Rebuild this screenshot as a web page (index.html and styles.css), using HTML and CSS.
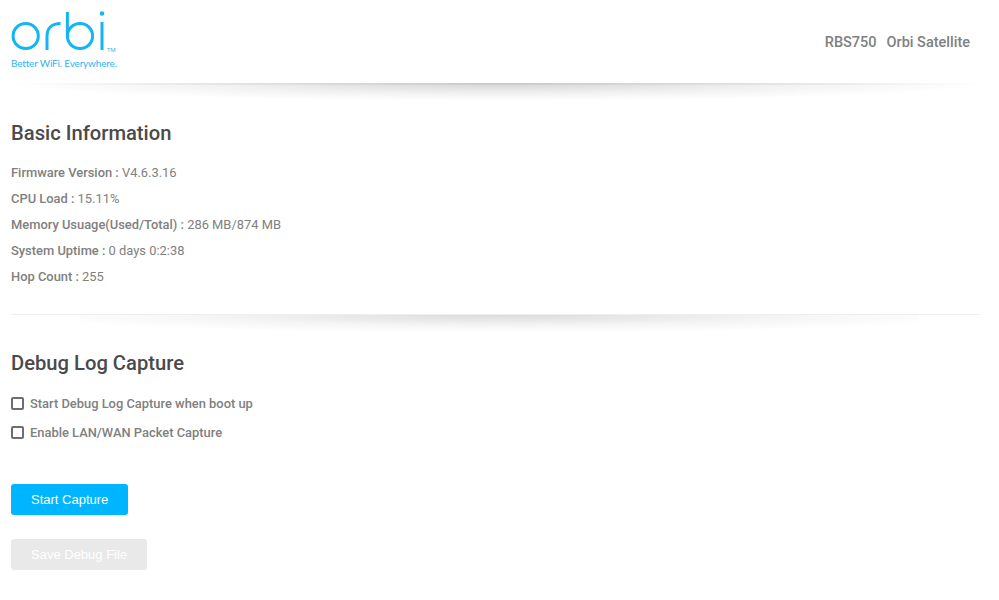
FILE: index.html
```html
<!DOCTYPE html>
<html>

<head>
  <title>Orbi Debug</title>
  <link rel="stylesheet" href="styles.css">
</head>

<body>
  <div class="header">
    <div class="logo">
      <svg class="logoMark" width="110" height="57" viewBox="10 0 110 57">
        <g fill="none" stroke="#12b5f5" stroke-width="3">
          <circle cx="25.7" cy="36" r="12.6" />
          <path d="M47 50V36C47 28 52 23.5 60.5 23.5" />
          <circle cx="80" cy="36" r="12.6" />
          <path d="M67.4 36V12" />
          <path d="M102 50V22" />
        </g>
        <circle cx="102" cy="13.5" r="2.3" fill="#12b5f5" />
      </svg>
      <span class="tm">TM</span>
      <div class="tagline">Better WiFi. Everywhere.</div>
    </div>
    <div class="model"><span>RBS750</span><span>Orbi Satellite</span></div>
  </div>
  <div class="shadow"></div>

  <div class="section">
    <h2>Basic Information</h2>
    <div class="row"><b>Firmware Version :</b> V4.6.3.16</div>
    <div class="row"><b>CPU Load :</b> 15.11%</div>
    <div class="row"><b>Memory Usuage(Used/Total) :</b> 286 MB/874 MB</div>
    <div class="row"><b>System Uptime :</b> 0 days 0:2:38</div>
    <div class="row"><b>Hop Count :</b> 255</div>
  </div>

  <div class="divider"></div>
  <div class="shadow shadowNarrow"></div>

  <div class="section debug">
    <h2>Debug Log Capture</h2>
    <label class="check"><input type="checkbox" />Start Debug Log Capture when boot up</label>
    <label class="check"><input type="checkbox" />Enable LAN/WAN Packet Capture</label>
    <div class="actions">
      <button class="btn">Start Capture</button>
      <button class="btn btnOff" disabled>Save Debug File</button>
    </div>
  </div>
</body>

</html>
```

FILE: styles.css
```css
body {
  margin: 0;
  background: #fff;
  color: #808080;
  font-family: Roboto, "Liberation Sans", sans-serif;
  font-size: 12.9px;
}

.header {
  height: 83px;
  padding: 0 29px 0 11px;
  display: flex;
  justify-content: space-between;
  box-sizing: border-box;
}

.logo {
  position: relative;
  width: 110px;
}

.logoMark {
  display: block;
  margin-left: -1px;
}

.tm {
  position: absolute;
  left: 96px;
  top: 46px;
  font-family: "Open Sans", sans-serif;
  font-size: 6px;
  color: #12b5f5;
}

.tagline {
  font-family: Lato, "Open Sans", sans-serif;
  font-size: 10px;
  letter-spacing: -0.17px;
  line-height: 12px;
  color: #2fb4ee;
  white-space: nowrap;
}

.model {
  display: flex;
  gap: 10px;
  padding-top: 34px;
  font-size: 14.5px;
  font-weight: 500;
  line-height: 18px;
}

.shadow {
  height: 18px;
  margin: 0 10px;
  background:
    linear-gradient(90deg, rgba(0, 0, 0, 0), rgba(0, 0, 0, 0.05) 20%, rgba(0, 0, 0, 0.05) 80%, rgba(0, 0, 0, 0)) no-repeat 0 0 / 100% 2px,
    radial-gradient(ellipse 50% 100% at 50% 0, rgba(0, 0, 0, 0.17), rgba(0, 0, 0, 0.05) 60%, rgba(0, 0, 0, 0) 100%);
}

.shadowNarrow {
  margin: 0 80px;
  background: radial-gradient(ellipse 58% 100% at 50% 0, rgba(0, 0, 0, 0.14), rgba(0, 0, 0, 0.04) 60%, rgba(0, 0, 0, 0) 100%);
}

.section {
  padding: 0 11px;
}

h2 {
  margin: 0;
  padding: 19px 0 14px;
  font-size: 20.2px;
  font-weight: 500;
  line-height: 26px;
  color: #4a4a4a;
}

.row {
  line-height: 26px;
}

.row b,
.check {
  font-weight: 500;
}

.divider {
  height: 1px;
  margin: 24px 19px 0 11px;
  background: #eee;
}

.debug h2 {
  padding: 17px 0 13px;
}

.check {
  display: flex;
  align-items: center;
  gap: 6px;
  height: 29px;
}

.check input {
  appearance: none;
  width: 13px;
  height: 13px;
  margin: 0;
  border: 2px solid #6e6e6e;
  border-radius: 2px;
  background: #fff;
}

.actions {
  display: flex;
  flex-direction: column;
  align-items: flex-start;
  gap: 24px;
  padding-top: 37px;
}

.btn {
  height: 31px;
  padding: 0 20px;
  border: none;
  border-radius: 3px;
  background: #00b5ff;
  color: #fff;
  font-family: "Liberation Sans", sans-serif;
  font-size: 13px;
}

.btnOff {
  background: #e9e9e9;
}
```
